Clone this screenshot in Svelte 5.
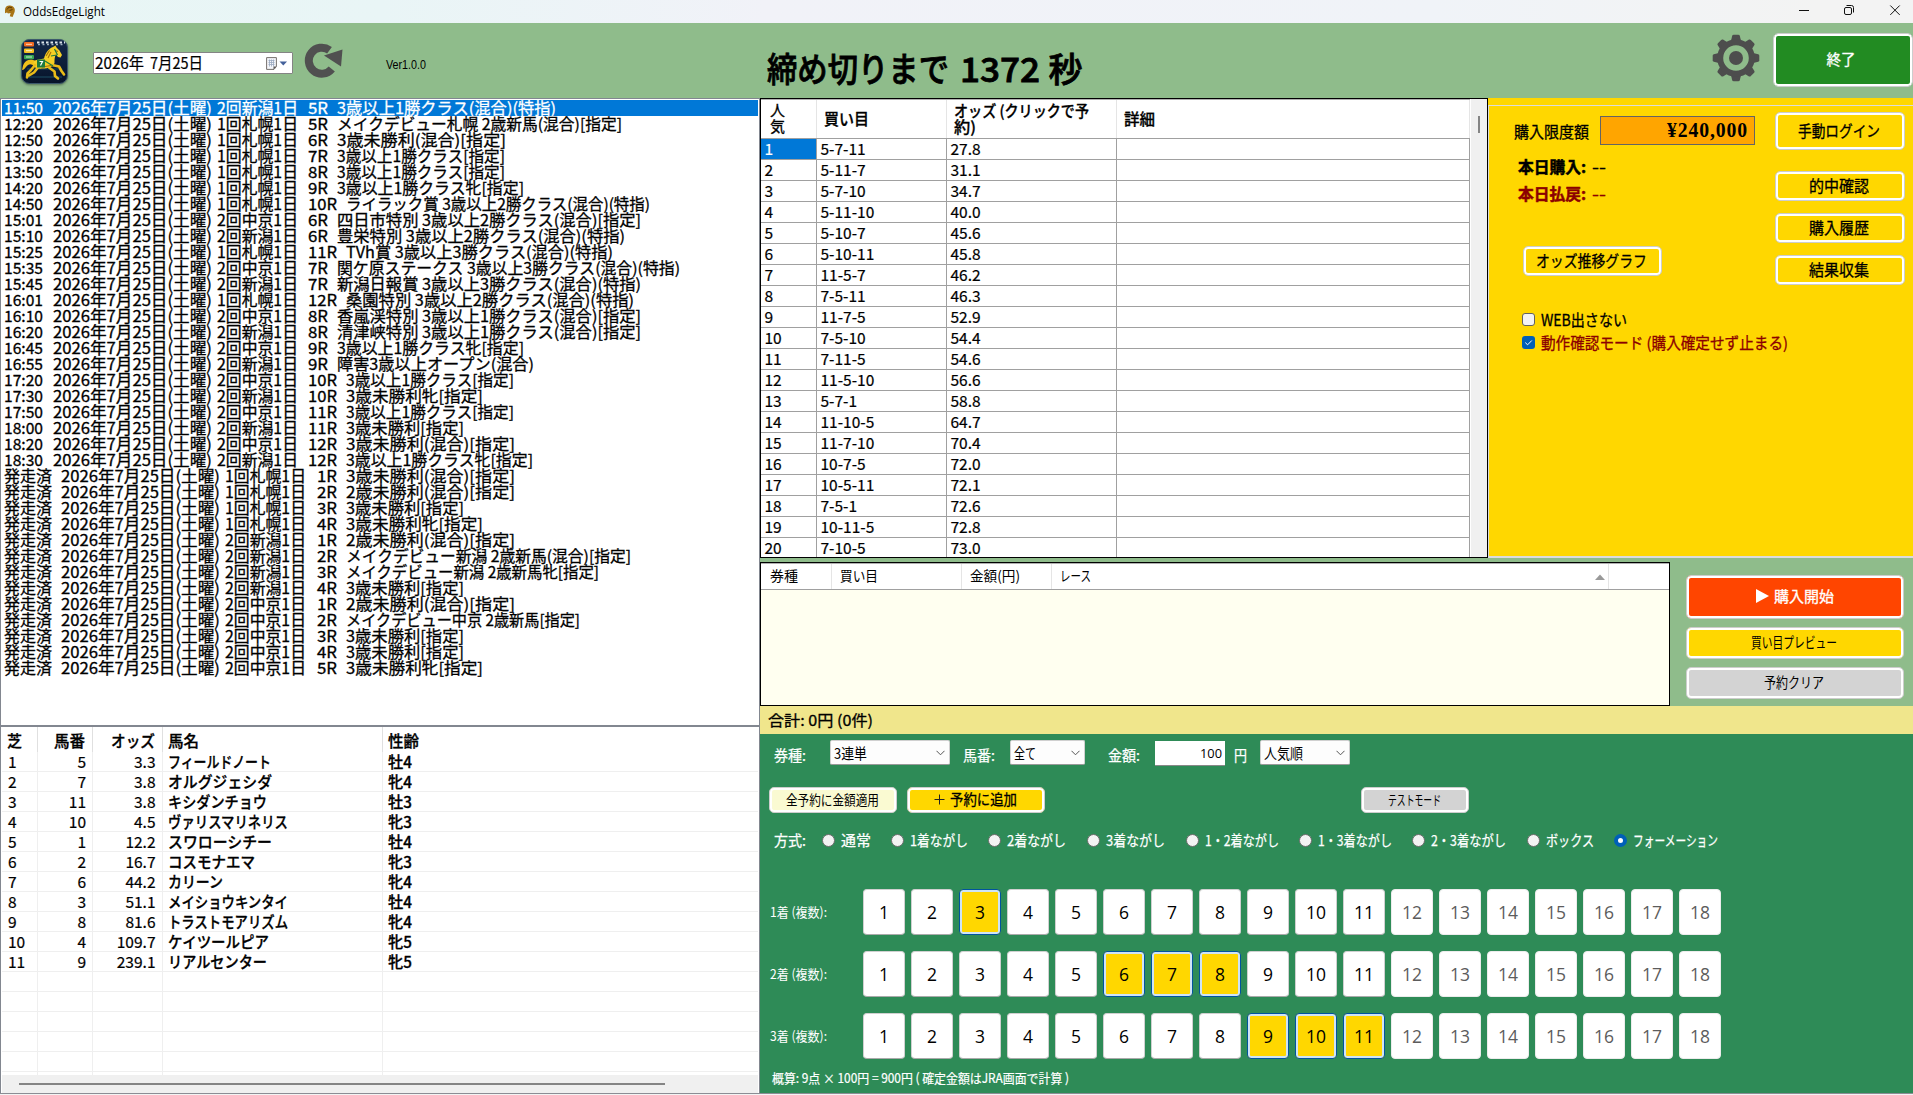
<script lang="ts">
  // Condenses or widens a text run so that it occupies exactly the given width.
  function fit(node: HTMLElement, width: number) {
    const natural = node.getBoundingClientRect().width;
    if (!natural || !width) return;
    node.style.transform = `translateX(-1px) scaleX(${width / natural})`;
    node.style.marginRight = `${width - natural}px`;
  }

  const day = '2026年7月25日(土曜)';
  const done = '発走済';
  // time, venue, race number, race name, width of the name
  const races: [string, string, string, string, number][] = [
    ['11:50', '2回新潟1日', '5R', '3歳以上1勝クラス(混合)(特指)', 219],
    ['12:20', '1回札幌1日', '5R', 'メイクデビュー札幌 2歳新馬(混合)[指定]', 285],
    ['12:50', '1回札幌1日', '6R', '3歳未勝利(混合)[指定]', 169],
    ['13:20', '1回札幌1日', '7R', '3歳以上1勝クラス[指定]', 168],
    ['13:50', '1回札幌1日', '8R', '3歳以上1勝クラス[指定]', 168],
    ['14:20', '1回札幌1日', '9R', '3歳以上1勝クラス牝[指定]', 187],
    ['14:50', '1回札幌1日', '10R', 'ライラック賞 3歳以上2勝クラス(混合)(特指)', 304],
    ['15:01', '2回中京1日', '6R', '四日市特別 3歳以上2勝クラス(混合)[指定]', 304],
    ['15:10', '2回新潟1日', '6R', '豊栄特別 3歳以上2勝クラス(混合)(特指)', 288],
    ['15:25', '1回札幌1日', '11R', 'TVh賞 3歳以上3勝クラス(混合)(特指)', 267],
    ['15:35', '2回中京1日', '7R', '関ケ原ステークス 3歳以上3勝クラス(混合)(特指)', 343],
    ['15:45', '2回新潟1日', '7R', '新潟日報賞 3歳以上3勝クラス(混合)(特指)', 304],
    ['16:01', '1回札幌1日', '12R', '桑園特別 3歳以上2勝クラス(混合)(特指)', 288],
    ['16:10', '2回中京1日', '8R', '香嵐渓特別 3歳以上1勝クラス(混合)[指定]', 304],
    ['16:20', '2回新潟1日', '8R', '清津峡特別 3歳以上1勝クラス(混合)[指定]', 304],
    ['16:45', '2回中京1日', '9R', '3歳以上1勝クラス牝[指定]', 187],
    ['16:55', '2回新潟1日', '9R', '障害3歳以上オープン(混合)', 197],
    ['17:20', '2回中京1日', '10R', '3歳以上1勝クラス[指定]', 168],
    ['17:30', '2回新潟1日', '10R', '3歳未勝利牝[指定]', 137],
    ['17:50', '2回中京1日', '11R', '3歳以上1勝クラス[指定]', 168],
    ['18:00', '2回新潟1日', '11R', '3歳未勝利[指定]', 118],
    ['18:20', '2回中京1日', '12R', '3歳未勝利(混合)[指定]', 169],
    ['18:30', '2回新潟1日', '12R', '3歳以上1勝クラス牝[指定]', 187],
    [done, '1回札幌1日', '1R', '3歳未勝利(混合)[指定]', 169],
    [done, '1回札幌1日', '2R', '2歳未勝利(混合)[指定]', 169],
    [done, '1回札幌1日', '3R', '3歳未勝利[指定]', 118],
    [done, '1回札幌1日', '4R', '3歳未勝利牝[指定]', 137],
    [done, '2回新潟1日', '1R', '2歳未勝利(混合)[指定]', 169],
    [done, '2回新潟1日', '2R', 'メイクデビュー新潟 2歳新馬(混合)[指定]', 285],
    [done, '2回新潟1日', '3R', 'メイクデビュー新潟 2歳新馬牝[指定]', 253],
    [done, '2回新潟1日', '4R', '3歳未勝利[指定]', 118],
    [done, '2回中京1日', '1R', '2歳未勝利(混合)[指定]', 169],
    [done, '2回中京1日', '2R', 'メイクデビュー中京 2歳新馬[指定]', 234],
    [done, '2回中京1日', '3R', '3歳未勝利[指定]', 118],
    [done, '2回中京1日', '4R', '3歳未勝利[指定]', 118],
    [done, '2回中京1日', '5R', '3歳未勝利牝[指定]', 137]
  ];

  const horses: [number | string, number | string, string, string, number, string][] = [
    [1, 5, '3.3', 'フィールドノート', 103, '牡4'],
    [2, 7, '3.8', 'オルグジェシダ', 104, '牝4'],
    [3, 11, '3.8', 'キシダンチョウ', 99, '牡3'],
    [4, 10, '4.5', 'ヴァリスマリネリス', 120, '牝3'],
    [5, 1, '12.2', 'スワローシチー', 104, '牡4'],
    [6, 2, '16.7', 'コスモナエマ', 87, '牝3'],
    [7, 6, '44.2', 'カリーン', 55, '牝4'],
    [8, 3, '51.1', 'メイショウキンタイ', 120, '牡4'],
    [9, 8, '81.6', 'トラストモアリズム', 120, '牝4'],
    [10, 4, '109.7', 'ケイツールピア', 101, '牝5'],
    [11, 9, '239.1', 'リアルセンター', 99, '牝5']
  ];
  const emptyRows = [1, 2, 3, 4, 5, 6];

  const odds: [string, string][] = [
    ['5-7-11', '27.8'], ['5-11-7', '31.1'], ['5-7-10', '34.7'], ['5-11-10', '40.0'],
    ['5-10-7', '45.6'], ['5-10-11', '45.8'], ['11-5-7', '46.2'], ['7-5-11', '46.3'],
    ['11-7-5', '52.9'], ['7-5-10', '54.4'], ['7-11-5', '54.6'], ['11-5-10', '56.6'],
    ['5-7-1', '58.8'], ['11-10-5', '64.7'], ['11-7-10', '70.4'], ['10-7-5', '72.0'],
    ['10-5-11', '72.1'], ['7-5-1', '72.6'], ['10-11-5', '72.8'], ['7-10-5', '73.0']
  ];

  // label, label width, width of the whole option
  const methods: [string, number, number][] = [
    ['通常', 30, 69], ['1着ながし', 58, 97], ['2着ながし', 59, 99], ['3着ながし', 59, 99],
    ['1・2着ながし', 74, 113], ['1・3着ながし', 74, 113], ['2・3着ながし', 75, 115],
    ['ボックス', 48, 87], ['フォーメーション', 85, 100]
  ];
  let method = $state('フォーメーション');

  const runners = 11;
  const numbers = Array.from({ length: 18 }, (_, i) => i + 1);
  let picks = $state([[3], [6, 7, 8], [9, 10, 11]]);

  function toggle(row: number, n: number) {
    picks[row] = picks[row].includes(n) ? picks[row].filter((p) => p !== n) : [...picks[row], n];
  }

  let hideWeb = $state(false);
  let dryRun = $state(true);
  const teeth = [0, 45, 90, 135, 180, 225, 270, 315];
</script>

{#snippet chevron()}
  <svg class="chevron" viewBox="0 0 9 6"><path d="M.5 .8 4.5 4.8 8.5 .8" fill="none" stroke="#555" /></svg>
{/snippet}

{#snippet check(on: boolean)}
  <span class="box" class:on>
    {#if on}
      <svg viewBox="0 0 13 13"><path d="M3.3 6.6 5.6 8.8 9.8 4.5" fill="none" stroke="#fff" /></svg>
    {/if}
  </span>
{/snippet}

<div class="window">
  <div class="titlebar">
    <svg class="mini" viewBox="0 0 12 13">
      <path d="M1 5C1 1.5 4 0 7 .8 10 1.4 11.5 4 10.6 7L8.6 12 5.8 11.2 6.6 8 4 8.6 3 7.4 1 8.2Z" fill="#a87516" />
      <path d="M3 4.5 5 2l3 .8M5.5 5.5l3-1" stroke="#5f3d08" fill="none" />
    </svg>
    <span class="fit apptitle" use:fit={82}>OddsEdgeLight</span>
    <span class="grow"></span>
    <svg class="winctl" viewBox="0 0 110 20" fill="none" stroke="#111">
      <path d="M4 10.5h10" />
      <rect x="49.5" y="7.5" width="7" height="7" rx="1.5" />
      <path d="M51.5 5.5h5a2 2 0 0 1 2 2v5" />
      <path d="M95.3 5.5l9.4 9.4M104.7 5.5l-9.4 9.4" />
    </svg>
  </div>

  <header>
    <svg class="logo" viewBox="0 0 47 46">
      <defs>
        <linearGradient id="night" x1="0" y1="0" x2="0" y2="1">
          <stop offset="0" stop-color="#14294a" /><stop offset="1" stop-color="#07142a" />
        </linearGradient>
      </defs>
      <rect x=".5" y=".5" width="46" height="44" rx="8" fill="url(#night)" stroke="#3c5a6c" />
      <path d="M6 30h35M6 38h35" stroke="#123248" stroke-width="2" />
      <path d="M16 3.5h28" stroke="#dfe6ec" stroke-width="2" stroke-dasharray="2.500 2" />
      <path d="M17 5.500h26" stroke="#9fb0bf" stroke-width="1.6" stroke-dasharray="2 2.500" />
      <rect x="3" y="3" width="10" height="4.6" rx="1" fill="#f26b21" />
      <rect x="3" y="9.5" width="10" height="4.4" rx="1" fill="#f5c021" />
      <rect x="3" y="16" width="10" height="4.2" rx="1" fill="#35a553" />
      <path d="M5 5.3h6M5 11.7h6M5 18h6" stroke="#fff" stroke-opacity=".75" />
      <!-- tail, body, neck and head -->
      <path d="M15 22C9 19.500 5 21 3 24.500 1.500 27 1.800 29 1 31 4 31 4.500 27.500 7 26 9.500 24.500 11 25.500 13 27Z" fill="#f0c01a" />
      <path d="M13 22C16 20 20 20.500 23 19.500 24 14.500 27 10 32 8L34.500 6.500 35.500 8.500 38.500 11.500 41 16 39.500 18.500 37 18 35 15.500C33.500 17.500 33.500 21 33.500 24 32 28 27 29.500 22 29.500 17 30 13 29 12 26.500Z" fill="#f6cf25" />
      <!-- legs -->
      <path d="M14 26 10 31 6.500 34.500 6 38.500M17 28.500 13 33.500 8 36.500M31 26 38 27.500 40.500 32 43 35.500M28 28.500 33.500 32.500 34 37 37 39.500" fill="none" stroke="#e9bb18" stroke-width="2.600" stroke-linejoin="round" stroke-linecap="round" />
      <path d="M25 17l3.500-5.500M27 19l3-6M21 28l9-1.500M34 11.500l3 1" stroke="#a66d08" fill="none" stroke-width="1.100" />
      <path d="M16 20.500h8v8h-8z" fill="#1d7b3e" /><path d="M24 22l8 5M33.500 10l3 6M30 17l6-1" stroke="#1d7b3e" stroke-width="1.2" fill="none" />
      <path d="M18.500 22.500h3l-2 4" stroke="#fff" fill="none" stroke-width="1.2" />
    </svg>
    <div class="date">
      <span class="fit" use:fit={49}>2026年</span>
      <span class="fit monthday" use:fit={53}>7月25日</span>
      <span class="grow"></span>
      <svg class="cal" viewBox="0 0 21 13">
        <path d="M.6 .6h9.800v9L8 12.400H.6z" fill="#f4f6fa" stroke="#75706d" />
        <path d="M2.500 3.500h6M2.500 5.500h6M2.500 7.500h6M3.500 2.500v7M5.500 2.500v7M7.500 2.500v7" stroke="#9aa9c0" stroke-width=".8" />
        <path d="M7.500 12.500V9.500h3z" fill="#5d5957" />
        <path d="M13.500 4.500h7.500l-3.750 4z" fill="#43609a" />
      </svg>
    </div>
    <svg class="reload" viewBox="0 0 40 36">
      <path d="M28.800 27A13 13 0 1 1 26.500 8.200" fill="none" stroke="#505050" stroke-width="8" />
      <path d="M39.500 7.500 38 24.500 21 13.500Z" fill="#505050" />
    </svg>
    <span class="fit ver" use:fit={40}>Ver1.0.0</span>
    <div class="countdown">
      <span class="fit" use:fit={182}>締め切りまで</span>
      <span class="fit secs" use:fit={80}>1372</span>
      <span class="fit" use:fit={34}>秒</span>
    </div>
    <span class="grow"></span>
    <svg class="gear" viewBox="-24 -24 48 48">
      <g fill="#4d4d4d">
        {#each teeth as a}<path d="M-5.500-15-3.800-22.200Q-3.500-23.300-2.300-23.300H2.300Q3.500-23.300 3.800-22.200L5.500-15Z" transform="rotate({a})" />{/each}
        <circle r="7" />
      </g>
      <circle r="15.800" fill="none" stroke="#4d4d4d" stroke-width="6" />
    </svg>
    <button class="btn quit"><span class="fit" use:fit={29}>終了</span></button>
  </header>

  <main>
    <section class="left">
      <div class="races">
        {#each races as [time, venue, no, name, w], i}
          <div class="race" class:selected={i === 0}>
            <span class="time" class:done={time === done}><span class="fit" use:fit={time === done ? 48 : 39}>{time}</span></span>
            <span class="day"><span class="fit" use:fit={159}>{day}</span></span>
            <span class="venue" class:done={time === done}><span class="fit" use:fit={81}>{venue}</span></span>
            <span class="no" class:wide={no.length > 2}><span class="fit" use:fit={no.length > 2 ? 29 : 20}>{no}</span></span>
            <span class="fit" use:fit={w}>{name}</span>
          </div>
        {/each}
      </div>
      <div class="horses">
        <div class="hrow hhead">
          <span><b class="fit" use:fit={15}>芝</b></span>
          <span class="r"><b class="fit" use:fit={31}>馬番</b></span>
          <span class="r"><b class="fit" use:fit={44}>オッズ</b></span>
          <span><b class="fit" use:fit={31}>馬名</b></span>
          <span><b class="fit" use:fit={31}>性齢</b></span>
        </div>
        <div class="hbody">
          {#each horses as [rank, no, odd, name, w, sex]}
            <div class="hrow">
              <span>{rank}</span><span class="r">{no}</span><span class="r">{odd}</span>
              <span><b class="fit" use:fit={w}>{name}</b></span>
              <span><b class="fit" use:fit={24}>{sex}</b></span>
            </div>
          {/each}
          {#each emptyRows as _}
            <div class="hrow"><span></span><span></span><span></span><span></span><span></span></div>
          {/each}
        </div>
        <div class="hscroll"><i></i></div>
      </div>
    </section>

    <section class="right">
      <div class="upper">
        <div class="oddsgrid">
          <div class="otable">
            <div class="orow ohead">
              <span>人<br />気</span>
              <span><b class="fit" use:fit={45}>買い目</b></span>
              <span><b class="fit" use:fit={135}>オッズ (クリックで予</b><br /><b class="fit" use:fit={22}>約)</b></span>
              <span><b class="fit" use:fit={31}>詳細</b></span>
            </div>
            {#each odds as [combo, value], i}
              <div class="orow"><span class:cur={i === 0}>{i + 1}</span><span>{combo}</span><span>{value}</span><span></span></div>
            {/each}
          </div>
          <div class="vscroll"><i></i></div>
        </div>

        <aside>
          <div class="account">
            <div class="limit">
              <span class="fit" use:fit={75}>購入限度額</span>
              <div class="amount"><span class="fit" use:fit={81}>¥240,000</span></div>
            </div>
            <div class="today"><b class="fit" use:fit={68}>本日購入:</b><span class="fit" use:fit={14}>--</span></div>
            <div class="today payout"><b class="fit" use:fit={68}>本日払戻:</b><span class="fit" use:fit={14}>--</span></div>
            <button class="btn gold graph"><span class="fit" use:fit={111}>オッズ推移グラフ</span></button>
            <label><input type="checkbox" bind:checked={hideWeb} />{@render check(hideWeb)}<span class="fit" use:fit={86}>WEB出さない</span></label>
            <label class="warn"><input type="checkbox" bind:checked={dryRun} />{@render check(dryRun)}<span class="fit" use:fit={247}>動作確認モード (購入確定せず止まる)</span></label>
          </div>
          <div class="actions">
            <button class="btn gold login"><span class="fit" use:fit={82}>手動ログイン</span></button>
            <button class="btn gold"><span class="fit" use:fit={60}>的中確認</span></button>
            <button class="btn gold"><span class="fit" use:fit={60}>購入履歴</span></button>
            <button class="btn gold"><span class="fit" use:fit={60}>結果収集</span></button>
          </div>
        </aside>
      </div>

      <div class="middle">
        <div class="reserve">
          <div class="rhead">
            <span><i class="fit" use:fit={28}>券種</i></span>
            <span><i class="fit" use:fit={38}>買い目</i></span>
            <span><i class="fit" use:fit={50}>金額(円)</i></span>
            <span><i class="fit" use:fit={31}>レース</i><svg class="sort" viewBox="0 0 10 6"><path d="M0 6 5 .5 10 6z" fill="#999" /></svg></span>
            <span></span>
          </div>
        </div>
        <div class="cmds">
          <button class="btn start">
            <svg class="play" viewBox="0 0 13 14"><path d="M0 0 13 7 0 14z" fill="#fff" /></svg>
            <span class="fit" use:fit={60}>購入開始</span>
          </button>
          <button class="btn gold thin"><span class="fit" use:fit={86}>買い目プレビュー</span></button>
          <button class="btn grey thin"><span class="fit" use:fit={60}>予約クリア</span></button>
        </div>
      </div>

      <div class="total"><span class="fit" use:fit={105}>合計: 0円 (0件)</span></div>

      <div class="betting">
        <div class="line selects">
          <span class="fit lb" use:fit={32}>券種:</span>
          <div class="sel s1"><span class="fit" use:fit={33}>3連単</span>{@render chevron()}</div>
          <span class="fit lb" use:fit={32}>馬番:</span>
          <div class="sel s2"><span class="fit" use:fit={22}>全て</span>{@render chevron()}</div>
          <span class="fit lb l3" use:fit={32}>金額:</span>
          <div class="num"><span class="fit" use:fit={22}>100</span></div>
          <span class="fit lb yen" use:fit={13}>円</span>
          <div class="sel s3"><span class="fit" use:fit={39}>人気順</span>{@render chevron()}</div>
        </div>
        <div class="line adds">
          <button class="btn pale thin"><span class="fit" use:fit={93}>全予約に金額適用</span></button>
          <button class="btn gold add">
            <svg class="plus" viewBox="0 0 11 11"><path d="M5.500 .5v10M.5 5.500h10" stroke="#222" /></svg>
            <span class="fit" use:fit={67}>予約に追加</span>
          </button>
          <button class="btn grey test thin"><span class="fit" use:fit={53}>テストモード</span></button>
        </div>
        <div class="line modes">
          <span class="fit lb" use:fit={32}>方式:</span>
          {#each methods as [label, w, total]}
            <button class="mode" style:width="{total}px" onclick={() => (method = label)}>
              <span class="radio" class:on={method === label}></span><span class="fit" use:fit={w}>{label}</span>
            </button>
          {/each}
        </div>
        <div class="picks">
          {#each picks as chosen, row}
            <div class="prow">
              <span class="plabel"><span class="fit" use:fit={57}>{row + 1}着 (複数):</span></span>
              {#each numbers as n}
                <button class="pick" class:on={chosen.includes(n)} disabled={n > runners} onclick={() => toggle(row, n)}>{n}</button>
              {/each}
            </div>
          {/each}
        </div>
        <div class="sum"><span class="fit" use:fit={297}>概算: 9点 × 100円 = 900円 ( 確定金額はJRA画面で計算 )</span></div>
      </div>
    </section>
  </main>
</div>

<style>
  :global(body) { background: #f3f3f3; overflow: hidden; }
  .window {
    width: 1913px; height: 1095px; overflow: hidden; display: flex; flex-direction: column;
    font-family: 'Noto Sans CJK JP', 'Noto Sans', sans-serif; font-size: 15.5px; color: #000;
  }
  .window, .window * { box-sizing: border-box; }
  button { font: inherit; color: inherit; padding: 0; margin: 0; border: 0; background: none; }
  b { font-weight: 500; -webkit-text-stroke: .3px currentColor; }
  i { font-style: normal; }
  .fit { display: inline-block; flex: none; white-space: pre; transform-origin: 0 50%; }
  .grow { flex: 1; }

  .titlebar { height: 23px; flex: none; display: flex; align-items: center; background: linear-gradient(90deg, #e8f6f5 0, #e9f5f6 20%, #f1f2f8 40%, #f0f3f8 75%, #f3f3f3 95%); }
  .mini { width: 12px; height: 13px; margin: 0 8px 1px 4px; }
  .apptitle { font: 12.5px/23px 'Open Sans', sans-serif; }
  .winctl { width: 110px; height: 20px; margin: 0 8px 3px 0; }
  header { height: 75px; flex: none; display: flex; align-items: flex-start; background: #8fbc8b; }
  .logo { width: 47px; height: 46px; margin: 16px 0 0 21px; filter: drop-shadow(0 1px 1px #0006); }
  .date { width: 200px; height: 22px; margin: 29px 0 0 25px; border: 1px solid #848484; border-radius: 1px; background: #fff; display: flex; align-items: center; padding: 0 5px 0 2px; line-height: 18px; -webkit-text-stroke: .2px currentColor; }
  .date .fit { margin-bottom: 2px; }
  .monthday { margin-left: 6px; }
  .cal { width: 21px; height: 13px; }
  .reload { width: 40px; height: 36px; margin: 19px 0 0 10px; }
  .ver { margin: 32px 0 0 43.500px; font: 13px/19px 'Liberation Sans', sans-serif; }
  .countdown { display: flex; margin: 20px 0 0 341px; font-size: 34px; font-weight: 500; line-height: 50px; height: 50px; -webkit-text-stroke: .8px currentColor; }
  .secs { margin-left: 11px; }
  .countdown :last-child { margin-left: 9px; }
  .gear { width: 48px; height: 48px; margin: 11px 13px 0 0; }

  .btn { display: flex; align-items: center; justify-content: center; flex: none; border: 1px solid #cdcdcd; border-radius: 5px; box-shadow: inset 0 0 0 2px #fff; line-height: 20px; padding-bottom: 2px; -webkit-text-stroke: .3px currentColor; }
  .gold { background: #ffd700; }
  .grey { background: #d3d3d3; }
  .pale { background: #fafad2; }
  .thin { -webkit-text-stroke: 0; }
  .quit { width: 140px; height: 54px; margin-top: 10px; background: #228b22; color: #fff; font-size: 14.500px; padding-right: 2px; }

  main { flex: none; height: 996px; display: flex; border-bottom: 1px solid #8b8d94; }
  .left { width: 760px; flex: none; display: flex; flex-direction: column; border-right: 1px solid #828790; border-left: 1px solid #828790; }
  .races { height: 628px; flex: none; border-top: 1px solid #828790; border-bottom: 1px solid #828790; padding: 1px 1px 0; background: #fff; }
  .race { height: 16px; display: flex; align-items: center; padding: 0 0 2px 3px; line-height: 14px; -webkit-text-stroke: .3px currentColor; }
  .selected { background: #0078d7; color: #fff; }
  .race > span { flex: none; }
  .time { width: 49px; }
  .time.done { width: 57px; }
  .day { width: 164px; }
  .venue { width: 91px; }
  .venue.done { width: 92px; }
  .no { width: 29px; }
  .no.wide { width: 38px; }

  .horses { flex: 1; min-height: 0; display: flex; flex-direction: column; border-top: 1px solid #828790; background: #fff; padding: 0 1px; }
  .hrow { display: grid; grid-template-columns: 35.500px 55.500px 69.500px 220px 1fr; height: 20px; flex: none; line-height: 19px; border-bottom: 1px solid #efefef; font-size: 15.500px; -webkit-text-stroke: .2px currentColor; }
  .hrow > span { border-right: 1px solid #efefef; padding: 0 6px; display: flex; align-items: center; }
  .hrow > span:last-child { border-right: 0; }
  .hrow > .r { justify-content: flex-end; }
  .hhead { height: 25px; border-bottom: 0; font-size: 16px; }
  .hhead > span { padding-top: 1px; border-color: #e0e0e0; }
  .hbody { flex: 1; min-height: 0; }
  .hbody > .hrow:last-child { height: 3px; border-bottom: 0; }
  .hscroll { height: 18px; flex: none; background: #f0f0f0; display: flex; align-items: center; padding-left: 17px; }
  .hscroll i { width: 646px; height: 2px; background: #858585; }

  .right { flex: 1; min-width: 0; display: flex; flex-direction: column; background: #8fbc8b; }
  .upper { height: 460px; flex: none; display: flex; }
  .oddsgrid { width: 728px; flex: none; display: flex; border: 1px solid #000; background: #fff; overflow: hidden; }
  .otable { width: 709px; border-top: 1px solid #b0b0b0; }
  .orow { display: grid; grid-template-columns: 56px 130px 170px 1fr; height: 21px; border-bottom: 1px solid #a0a0a0; line-height: 18px; -webkit-text-stroke: .2px currentColor; }
  .orow > span { border-right: 1px solid #a0a0a0; padding-left: 3.500px; }
  .orow > .cur { background: #0078d7; color: #fff; }
  .ohead { height: 39px; align-items: stretch; line-height: 16px; font-size: 15.500px; -webkit-text-stroke: .3px currentColor; }
  .ohead > span { display: flex; align-items: center; padding: 0 0 2px 8px; border-color: #e5e5e5; }
  .ohead > span:first-child, .ohead > span:nth-child(3) { display: block; padding-top: 2px; }
  .ohead > span:first-child { padding-left: 9px; font-size: 15px; }
  .vscroll { flex: 1; background: #f0f0f0; border-left: 1px solid #fff; padding: 17px 0 0 7px; }
  .vscroll i { display: block; width: 2px; height: 17px; background: #858585; }

  aside { flex: 1; background: #ffd700; display: flex; box-shadow: inset 0 7px 0 #ffd700, inset 1px 8px 0 #dcdcdc, inset 0 -2px 0 #dcdcdc; padding: 14px 8px 0 27px; -webkit-text-stroke: .3px currentColor; }
  .account { line-height: 22px; padding-top: 4px; width: 260px; flex: none; }
  .limit { display: flex; align-items: center; height: 29px; width: 240px; justify-content: space-between; }
  .amount { width: 155px; height: 29px; flex: none; background: #ffa500; border: 1px solid #646464; display: flex; justify-content: flex-end; padding-right: 5px; font: bold 22px/26px 'Liberation Serif', serif; letter-spacing: 1px; -webkit-text-stroke: 0; }
  .today { display: flex; align-items: center; padding-left: 4px; height: 26.500px; gap: 6px; }
  .today b { font-weight: 700; -webkit-text-stroke: .5px currentColor; }
  .limit + .today { margin-top: 8px; }
  .payout { color: #8b0000; }
  .graph { width: 139px; height: 30px; margin: 40px 0 0 7.500px; }
  label { display: flex; align-items: center; height: 23px; padding-left: 7px; }
  .graph + label { margin-top: 32px; }
  label input { display: none; }
  label .fit { margin-top: -2px; }
  .warn { color: #8b0000; }
  .box { width: 13px; height: 13px; flex: none; border: 1px solid #626262; border-radius: 3px; background: #f3f3f3; margin-right: 7px; }
  .box.on { border: 0; background: #005fb8; }
  .box svg { display: block; width: 13px; height: 13px; }
  .actions { display: flex; flex-direction: column; gap: 12px; width: 130px; flex: none; }
  .actions .btn { height: 30px; }
  .actions .login { height: 38px; margin-bottom: 9px; }

  .middle { height: 148px; flex: none; display: flex; padding-top: 4px; }
  .reserve { width: 910px; flex: none; border: 1px solid #000; background: #fffff0; }
  .rhead { display: grid; grid-template-columns: 71px 130px 90px 557px 1fr; height: 27px; background: #fff; border-top: 1px solid #b0b0b0; border-bottom: 1px solid #a0a0a0; font-size: 14px; line-height: 20px; }
  .rhead > span { border-right: 1px solid #e5e5e5; padding: 1px 3px 0 8.500px; display: flex; justify-content: space-between; align-items: flex-start; }
  .rhead > span:first-child { padding-left: 10px; }
  .rhead > span:last-child { border: 0; }
  .sort { width: 10px; height: 6px; margin-top: 9px; }
  .cmds { padding: 13px 0 0 16px; display: flex; flex-direction: column; gap: 8px; }
  .cmds .btn { width: 218px; height: 32px; font-size: 14.500px; }
  .cmds .start { height: 44px; background: #ff4500; color: #fff; }
  .play { width: 13px; height: 14px; margin-right: 6px; }

  .total { height: 28px; flex: none; background: #f0e68c; padding-left: 8.500px; line-height: 28px; font-size: 15px; -webkit-text-stroke: .3px currentColor; }
  .betting { flex: 1; background: #2e8b57; color: #fff; padding-top: 6px; }
  .line { display: flex; align-items: center; font-size: 14.500px; -webkit-text-stroke: .25px currentColor; }
  .selects { height: 25px; line-height: 22px; padding-left: 14.500px; }
  .lb { position: relative; top: 2px; }
  .sel { height: 25px; flex: none; background: #fdfdfd; border: 1px solid #d0d0d0; border-bottom-color: #999; border-radius: 2px; color: #000; -webkit-text-stroke: 0; display: flex; align-items: center; justify-content: space-between; padding: 0 4px; }
  .chevron { width: 9px; height: 6px; }
  .s1 { width: 120px; margin: 0 14px 0 23px; }
  .s2 { width: 75px; margin: 0 24px 0 14px; }
  .s3 { width: 90px; margin-left: 12px; }
  .num { width: 70px; height: 25px; margin: 2px 10px 0 14px; background: #fff; border-bottom: 1px solid #888; color: #000; font: 13px/24px 'Open Sans', sans-serif; display: flex; justify-content: flex-end; padding-right: 2px; -webkit-text-stroke: 0; }
  .adds { padding: 22px 0 0 9px; }
  .adds .btn { height: 26px; }
  .pale { width: 128px; font-size: 13.500px; color: #000; }
  .add { width: 138px; margin-left: 10px; color: #000; padding-right: 1px; }
  .plus { width: 11px; height: 11px; margin-right: 6px; }
  .test { width: 108px; margin-left: 316px; font-size: 13.500px; color: #000; }
  .modes { height: 24px; margin-top: 15px; padding-left: 14.500px; line-height: 22px; }
  .modes .lb { top: 0; }
  .mode { display: flex; align-items: center; flex: none; text-align: left; }
  .mode:nth-child(2) { margin-left: 15.500px; }
  .radio { width: 13px; height: 13px; flex: none; border-radius: 50%; background: #f3f3f3; border: 1px solid #6b6b6b; margin-right: 7px; }
  .radio.on { border: 4px solid #005fb8; background: #fff; }
  .picks { display: flex; flex-direction: column; gap: 16px; margin-top: 37px; padding-left: 11px; }
  .prow { display: flex; gap: 6px; height: 46px; align-items: center; }
  .plabel { width: 86px; font-size: 13px; line-height: 20px; }
  .pick { width: 42px; height: 46px; flex: none; border: 1px solid #d0d0d0; border-bottom-color: #aaa; border-radius: 4px; background: #fff; color: #000; font: 17.500px/44px 'Open Sans', sans-serif; text-align: center; }
  .pick:disabled { color: #5c5c5c; border-color: #ececec; }
  .pick.on { background: #ffd700; border-color: #00549c; box-shadow: inset 0 0 0 2px #cde4f7; }
  .sum { padding: 8px 0 0 13px; font-size: 13px; line-height: 22px; -webkit-text-stroke: .2px currentColor; }
</style>
